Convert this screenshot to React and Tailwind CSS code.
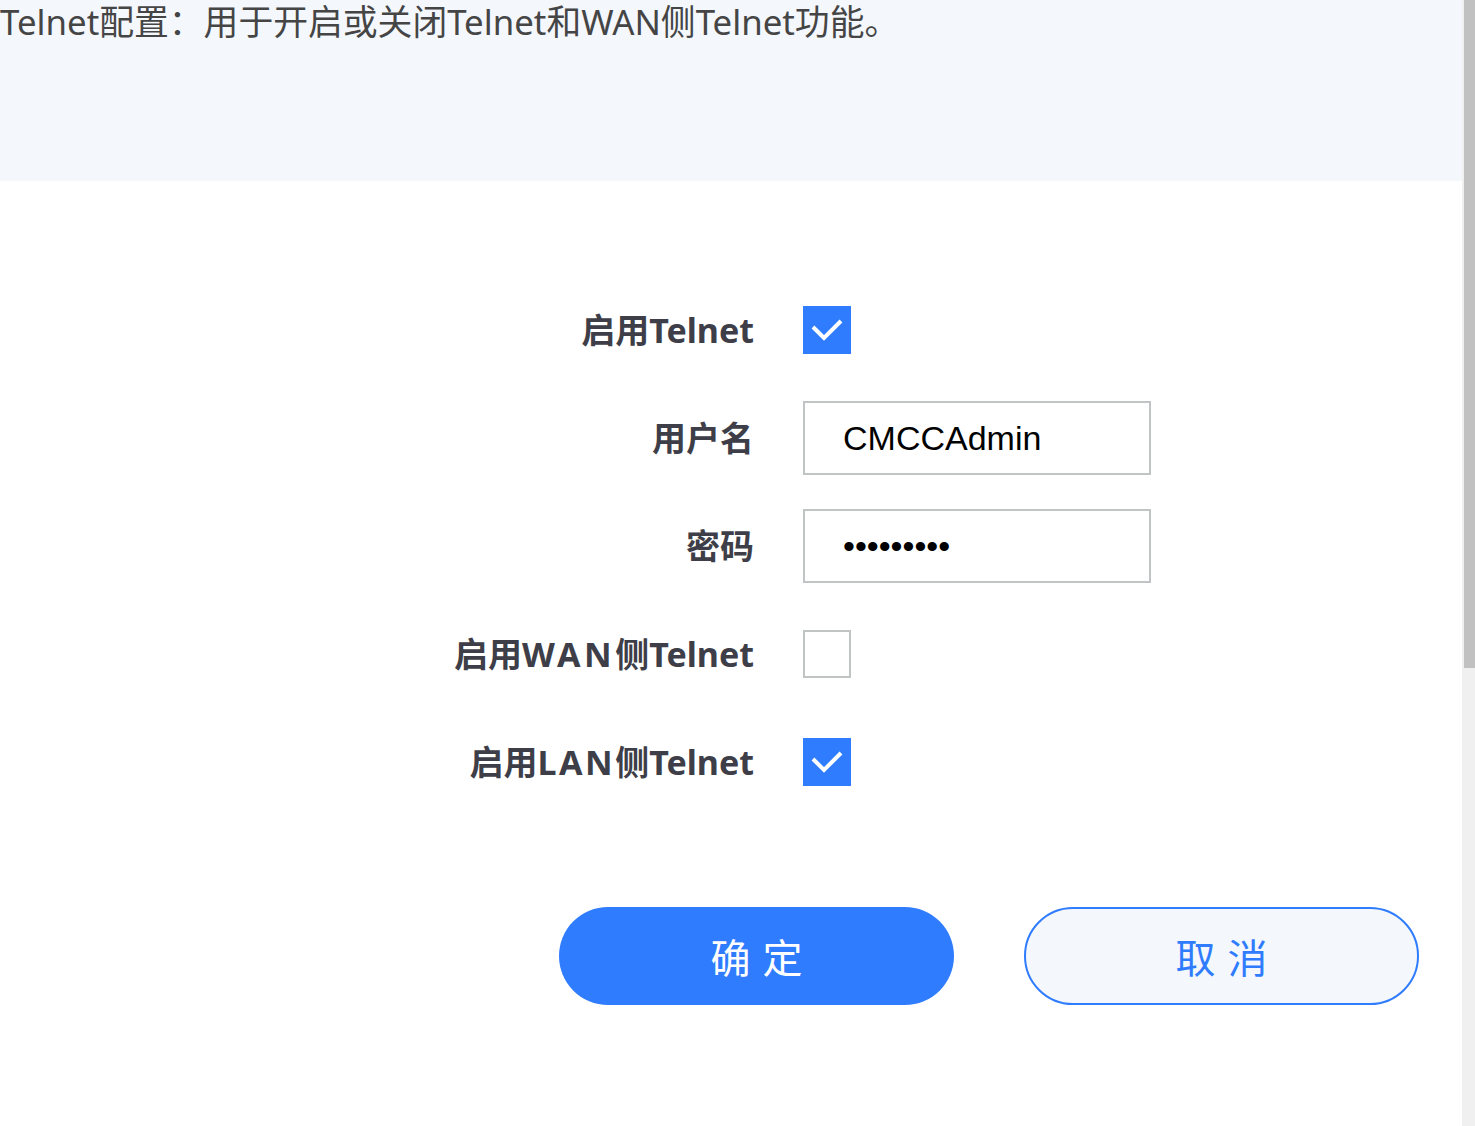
import React from "react";

const cjk = { fontFamily: '"Noto Sans CJK SC", "Noto Sans", sans-serif' };
const mixed = { fontFamily: '"Noto Sans", "Noto Sans CJK SC", sans-serif' };
const arial = { fontFamily: '"Liberation Sans", Arial, sans-serif' };

function Check({ checked }) {
  if (!checked) {
    return <div className="w-[48px] h-[48px] border-2 border-[#c0c4c4] bg-white" />;
  }
  return (
    <div className="w-[48px] h-[48px] bg-[#2f7cff] flex items-center justify-center">
      <svg width="48" height="48" viewBox="0 0 48 48">
        <polyline points="10,21 21,32 38,15" fill="none" stroke="white" strokeWidth="4" />
      </svg>
    </div>
  );
}

function Row({ label, children }) {
  return (
    <div className="h-[108px] flex items-center">
      <div className="w-[754px] text-right text-[34px] font-bold text-[#3e3e48] leading-none" style={mixed}>
        {label}
      </div>
      <div className="ml-[49px] flex items-center">{children}</div>
    </div>
  );
}

function TextInput({ type, value }) {
  return (
    <input
      type={type}
      value={value}
      readOnly
      className="w-[348px] h-[74px] border-2 border-[#c0c4c4] pl-[38px] text-[34px] text-black outline-none bg-white"
      style={arial}
    />
  );
}

export default function App() {
  return (
    <div className="w-[1475px] h-[1126px] flex overflow-hidden bg-white">
      <div className="w-[1462px] h-full flex flex-col">
        <div className="h-[181px] bg-[#f4f7fc] shrink-0">
          <div className="text-[34.8px] leading-[44px] text-[#454545] whitespace-nowrap" style={mixed}>
            Telnet配置：用于开启或关闭Telnet和WAN侧Telnet功能。
          </div>
        </div>
        <div className="mt-[95px] flex flex-col">
          <Row label="启用Telnet">
            <Check checked />
          </Row>
          <Row label="用户名">
            <TextInput type="text" value="CMCCAdmin" />
          </Row>
          <Row label="密码">
            <TextInput type="password" value="123456789" />
          </Row>
          <Row label={<>启用<span className="tracking-[3.5px]">WAN</span>侧Telnet</>}>
            <Check checked={false} />
          </Row>
          <Row label={<>启用<span className="tracking-[2.5px]">LAN</span>侧Telnet</>}>
            <Check checked />
          </Row>
        </div>
        <div className="mt-[91px] ml-[559px] flex gap-[70px]">
          <button
            className="w-[395px] h-[98px] rounded-full bg-[#2f7cff] text-white text-[40px] tracking-[12px] pl-[12px] flex items-center justify-center"
            style={cjk}
          >
            确定
          </button>
          <button
            className="w-[395px] h-[98px] rounded-full bg-[#f4f7fc] border-2 border-[#2f7cff] text-[#2f7cff] text-[40px] tracking-[12px] pl-[12px] flex items-center justify-center"
            style={cjk}
          >
            取消
          </button>
        </div>
      </div>
      <div className="w-[13px] h-full bg-[#f0f0f0] flex">
        <div className="ml-[2px] w-[11px] h-[668px] bg-[#c1c1c1]" />
      </div>
    </div>
  );
}
